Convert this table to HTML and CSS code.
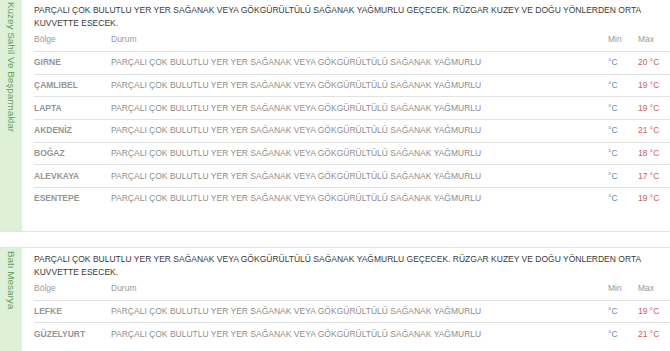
FILE: index.html
```html
<!DOCTYPE html>
<html lang="tr">
<head>
<meta charset="utf-8">
<link rel="stylesheet" href="styles.css">
</head>
<body>
<div class="page">
  <section class="region">
    <div class="region-name">Kuzey Sahil Ve Beşparmaklar</div>
    <div class="region-body">
      <p class="summary">PARÇALI ÇOK BULUTLU YER YER SAĞANAK VEYA GÖKGÜRÜLTÜLÜ SAĞANAK YAĞMURLU GEÇECEK. RÜZGAR KUZEY VE DOĞU YÖNLERDEN ORTA KUVVETTE ESECEK.</p>
      <table class="forecast">
        <thead>
          <tr><th class="c-place">Bölge</th><th>Durum</th><th class="c-min">Min</th><th class="c-max">Max</th></tr>
        </thead>
        <tbody>
          <tr><td class="place">GIRNE</td><td class="state">PARÇALI ÇOK BULUTLU YER YER SAĞANAK VEYA GÖKGÜRÜLTÜLÜ SAĞANAK YAĞMURLU</td><td class="min">°C</td><td class="max">20 °C</td></tr>
          <tr><td class="place">ÇAMLIBEL</td><td class="state">PARÇALI ÇOK BULUTLU YER YER SAĞANAK VEYA GÖKGÜRÜLTÜLÜ SAĞANAK YAĞMURLU</td><td class="min">°C</td><td class="max">19 °C</td></tr>
          <tr><td class="place">LAPTA</td><td class="state">PARÇALI ÇOK BULUTLU YER YER SAĞANAK VEYA GÖKGÜRÜLTÜLÜ SAĞANAK YAĞMURLU</td><td class="min">°C</td><td class="max">19 °C</td></tr>
          <tr><td class="place">AKDENİZ</td><td class="state">PARÇALI ÇOK BULUTLU YER YER SAĞANAK VEYA GÖKGÜRÜLTÜLÜ SAĞANAK YAĞMURLU</td><td class="min">°C</td><td class="max">21 °C</td></tr>
          <tr><td class="place">BOĞAZ</td><td class="state">PARÇALI ÇOK BULUTLU YER YER SAĞANAK VEYA GÖKGÜRÜLTÜLÜ SAĞANAK YAĞMURLU</td><td class="min">°C</td><td class="max">18 °C</td></tr>
          <tr><td class="place">ALEVKAYA</td><td class="state">PARÇALI ÇOK BULUTLU YER YER SAĞANAK VEYA GÖKGÜRÜLTÜLÜ SAĞANAK YAĞMURLU</td><td class="min">°C</td><td class="max">17 °C</td></tr>
          <tr><td class="place">ESENTEPE</td><td class="state">PARÇALI ÇOK BULUTLU YER YER SAĞANAK VEYA GÖKGÜRÜLTÜLÜ SAĞANAK YAĞMURLU</td><td class="min">°C</td><td class="max">19 °C</td></tr>
        </tbody>
      </table>
    </div>
  </section>
  <section class="region">
    <div class="region-name">Batı Mesarya</div>
    <div class="region-body">
      <p class="summary">PARÇALI ÇOK BULUTLU YER YER SAĞANAK VEYA GÖKGÜRÜLTÜLÜ SAĞANAK YAĞMURLU GEÇECEK. RÜZGAR KUZEY VE DOĞU YÖNLERDEN ORTA KUVVETTE ESECEK.</p>
      <table class="forecast">
        <thead>
          <tr><th class="c-place">Bölge</th><th>Durum</th><th class="c-min">Min</th><th class="c-max">Max</th></tr>
        </thead>
        <tbody>
          <tr><td class="place">LEFKE</td><td class="state">PARÇALI ÇOK BULUTLU YER YER SAĞANAK VEYA GÖKGÜRÜLTÜLÜ SAĞANAK YAĞMURLU</td><td class="min">°C</td><td class="max">19 °C</td></tr>
          <tr><td class="place">GÜZELYURT</td><td class="state">PARÇALI ÇOK BULUTLU YER YER SAĞANAK VEYA GÖKGÜRÜLTÜLÜ SAĞANAK YAĞMURLU</td><td class="min">°C</td><td class="max">21 °C</td></tr>
        </tbody>
      </table>
    </div>
  </section>
</div>
</body>
</html>
```

FILE: styles.css
```css
html, body {
  margin: 0;
  padding: 0;
  background: #ffffff;
  font-family: "Liberation Sans", Arial, sans-serif;
}

.page {
  margin-top: -2px;
  display: flex;
  flex-direction: column;
  gap: 15px;
}

.region {
  display: flex;
  border-top: 1px solid #e4e4e4;
  border-bottom: 1px solid #e4e4e4;
}

.region-name {
  width: 22px;
  flex: none;
  background: #dff0d8;
  color: #62a262;
  writing-mode: vertical-rl;
  font-size: 9.9px;
  line-height: 22px;
  padding-top: 3px;
  box-sizing: border-box;
  white-space: nowrap;
}

.region-body {
  flex: 1;
  padding: 5px 0 21px 12px;
  min-width: 0;
}

.summary {
  margin: 0;
  font-size: 8.5px;
  line-height: 13px;
  color: #3a3a3a;
}

.forecast {
  width: 100%;
  border-collapse: separate;
  border-spacing: 0;
  font-size: 8.5px;
  table-layout: fixed;
}

.forecast th {
  text-align: left;
  font-weight: normal;
  color: #9a9a9a;
  padding: 4px 0 6px;
  line-height: 11px;
  border-bottom: 1px solid #e2e2e2;
}

.c-place { width: 77px; }
.c-min { width: 30px; }
.c-max { width: 32px; }

.forecast td {
  padding: 5.33px 0 5.34px;
  line-height: 11px;
  white-space: nowrap;
  overflow: hidden;
}

.forecast tbody tr + tr td {
  border-top: 1px solid #e2e2e2;
}

.place {
  color: #969696;
  font-weight: bold;
}

.state {
  color: #8e8e8e;
}

.min {
  color: #5d8fb8;
}

.max {
  color: #d06060;
}
```
